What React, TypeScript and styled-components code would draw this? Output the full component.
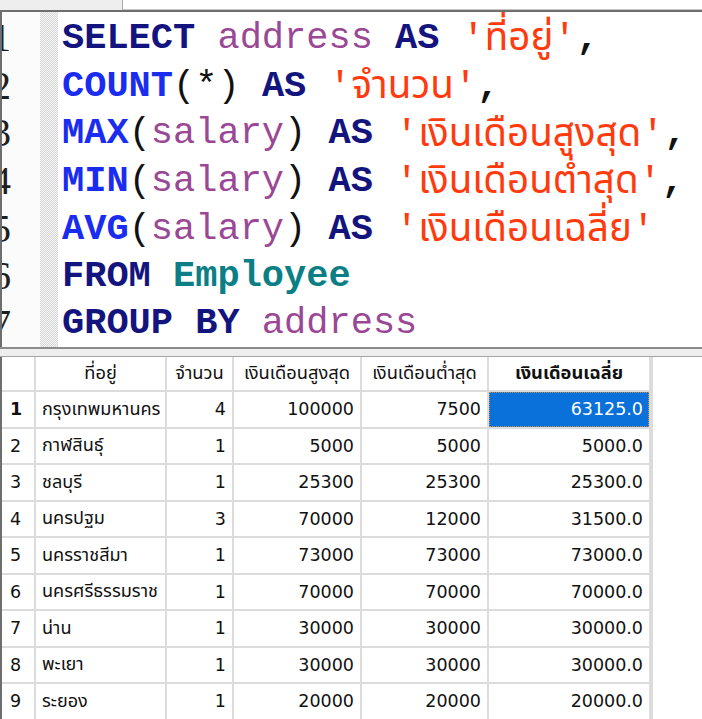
import React from "react";
import styled, { createGlobalStyle } from "styled-components";

const Global = createGlobalStyle`
  html, body { margin: 0; padding: 0; background: #ffffff; overflow: hidden; }
  #root { width: 702px; height: 719px; overflow: hidden; }
`;

const Page = styled.div`
  width: 702px;
  height: 719px;
  display: flex;
  flex-direction: column;
  background: #ffffff;
`;

const TopBar = styled.div`
  height: 10px;
  display: flex;
  background: #eeeeee;
  border-bottom: 2px solid #6e6e6e;
`;

const QueryBox = styled.div`
  margin-left: 122px;
  flex: 1;
  background: #ffffff;
  border-left: 1px solid #a9a9a9;
  border-bottom: 1px solid #c8c8c8;
`;

const Editor = styled.div`
  display: flex;
  border-left: 2px solid #6e6e6e;
  height: 335px;
  overflow: hidden;
`;

const Gutter = styled.div`
  display: flex;
  width: 56px;
  flex: none;
`;

const NumCol = styled.div`
  width: 38px;
  background: #fbfbfb;
  display: flex;
  flex-direction: column;
  padding-top: 2px;
`;

const LineNo = styled.div`
  width: 9px;
  height: 47.8px;
  display: flex;
  justify-content: flex-end;
  align-items: center;
  overflow: hidden;
  font-family: "Liberation Serif", serif;
  font-size: 39px;
  color: #1e1e1e;
  white-space: nowrap;
`;

const Hatch = styled.div`
  width: 18px;
  background: repeating-conic-gradient(#d6d6d6 0 25%, #f6f6f6 0 50%) 0 0 / 2px 2px;
`;

const Code = styled.div`
  flex: 1;
  padding-left: 4px;
  padding-top: 2px;
  display: flex;
  flex-direction: column;
`;

const Line = styled.div`
  height: 47.8px;
  display: flex;
  align-items: center;
  white-space: pre;
  font-family: "Liberation Mono", "Courier New", Tahoma, "Noto Sans Thai", Loma, monospace;
  font-size: 37px;
`;

type Kind = "kw" | "fn" | "id" | "tbl" | "str" | "p" | "c";

const colors: Record<Kind, string> = {
  kw: "#14147e",
  fn: "#1a2cf0",
  id: "#9a4896",
  tbl: "#0c7f86",
  str: "#ff3a0c",
  p: "#111111",
  c: "#111111",
};

const Tok = styled.span<{ $k: Kind }>`
  color: ${(p) => colors[p.$k]};
  font-weight: ${(p) => (p.$k === "kw" || p.$k === "fn" || p.$k === "tbl" || p.$k === "c" ? 700 : 400)};
  font-size: ${(p) => (p.$k === "str" ? "38.5px" : "37px")};
`;

const Splitter = styled.div`
  height: 7px;
  border-top: 2px solid #8c8c8c;
  border-bottom: 1px solid #a5a5a5;
  background: #eeeeee;
  flex: none;
`;

const Results = styled.div`
  flex: 1;
  border-left: 2px solid #6e6e6e;
  background: #ffffff;
  overflow: hidden;
`;

const Grid = styled.div`
  width: 649px;
  display: grid;
  grid-template-columns: 32px 129px 65px 126px 125px 160px;
  grid-auto-rows: 34.5px;
  grid-template-rows: 33px;
  gap: 2px;
  background: #dcdcdc;
  padding-right: 2px;
  font-family: "DejaVu Sans", Verdana, Tahoma, "Noto Sans Thai", Loma, sans-serif;
  font-size: 17.5px;
  color: #111111;
`;

const Head = styled.div<{ $bold?: boolean }>`
  background: #ffffff;
  display: flex;
  align-items: center;
  justify-content: center;
  font-size: 18.3px;
  font-weight: ${(p) => (p.$bold ? 700 : 400)};
  white-space: nowrap;
  overflow: hidden;
`;

const RowNo = styled.div<{ $bold?: boolean }>`
  background: #ffffff;
  display: flex;
  align-items: center;
  padding-left: 8px;
  font-weight: ${(p) => (p.$bold ? 700 : 400)};
`;

const Cell = styled.div<{ $num?: boolean; $sel?: boolean }>`
  background: ${(p) => (p.$sel ? "#0a70da" : "#ffffff")};
  color: ${(p) => (p.$sel ? "#ffffff" : "#111111")};
  outline: ${(p) => (p.$sel ? "1px dotted #c89050" : "none")};
  outline-offset: -1px;
  display: flex;
  align-items: center;
  justify-content: ${(p) => (p.$num ? "flex-end" : "flex-start")};
  font-size: ${(p) => (p.$num ? "17.5px" : "18.1px")};
  padding: 0 6px;
  white-space: nowrap;
  overflow: hidden;
`;

type T = [Kind, string];
const lines: T[][] = [
  [["kw", "SELECT"], ["p", " "], ["id", "address"], ["p", " "], ["kw", "AS"], ["p", " "], ["str", "'ที่อยู่'"], ["c", ","]],
  [["fn", "COUNT"], ["p", "(*)"], ["p", " "], ["kw", "AS"], ["p", " "], ["str", "'จำนวน'"], ["c", ","]],
  [["fn", "MAX"], ["p", "("], ["id", "salary"], ["p", ")"], ["p", " "], ["kw", "AS"], ["p", " "], ["str", "'เงินเดือนสูงสุด'"], ["c", ","]],
  [["fn", "MIN"], ["p", "("], ["id", "salary"], ["p", ")"], ["p", " "], ["kw", "AS"], ["p", " "], ["str", "'เงินเดือนต่ำสุด'"], ["c", ","]],
  [["fn", "AVG"], ["p", "("], ["id", "salary"], ["p", ")"], ["p", " "], ["kw", "AS"], ["p", " "], ["str", "'เงินเดือนเฉลี่ย'"]],
  [["kw", "FROM"], ["p", " "], ["tbl", "Employee"]],
  [["kw", "GROUP BY"], ["p", " "], ["id", "address"]],
];

const headers = ["ที่อยู่", "จำนวน", "เงินเดือนสูงสุด", "เงินเดือนต่ำสุด", "เงินเดือนเฉลี่ย"];

const rows: [string, number, number, number, string][] = [
  ["กรุงเทพมหานคร", 4, 100000, 7500, "63125.0"],
  ["กาฬสินธุ์", 1, 5000, 5000, "5000.0"],
  ["ชลบุรี", 1, 25300, 25300, "25300.0"],
  ["นครปฐม", 3, 70000, 12000, "31500.0"],
  ["นครราชสีมา", 1, 73000, 73000, "73000.0"],
  ["นครศรีธรรมราช", 1, 70000, 70000, "70000.0"],
  ["น่าน", 1, 30000, 30000, "30000.0"],
  ["พะเยา", 1, 30000, 30000, "30000.0"],
  ["ระยอง", 1, 20000, 20000, "20000.0"],
];

export default function App() {
  return (
    <Page>
      <Global />
      <TopBar>
        <QueryBox />
      </TopBar>
      <Editor>
        <Gutter>
          <NumCol>
            {lines.map((_, i) => (
              <LineNo key={i}>{i + 1}</LineNo>
            ))}
          </NumCol>
          <Hatch />
        </Gutter>
        <Code>
          {lines.map((ln, i) => (
            <Line key={i}>
              {ln.map(([k, t], j) => (
                <Tok key={j} $k={k}>
                  {t}
                </Tok>
              ))}
            </Line>
          ))}
        </Code>
      </Editor>
      <Splitter />
      <Results>
        <Grid>
          <Head />
          {headers.map((h, i) => (
            <Head key={h} $bold={i === 4}>
              {h}
            </Head>
          ))}
          {rows.map((r, i) => (
            <React.Fragment key={i}>
              <RowNo $bold={i === 0}>{i + 1}</RowNo>
              <Cell>{r[0]}</Cell>
              <Cell $num>{r[1]}</Cell>
              <Cell $num>{r[2]}</Cell>
              <Cell $num>{r[3]}</Cell>
              <Cell $num $sel={i === 0}>
                {r[4]}
              </Cell>
            </React.Fragment>
          ))}
        </Grid>
      </Results>
    </Page>
  );
}
